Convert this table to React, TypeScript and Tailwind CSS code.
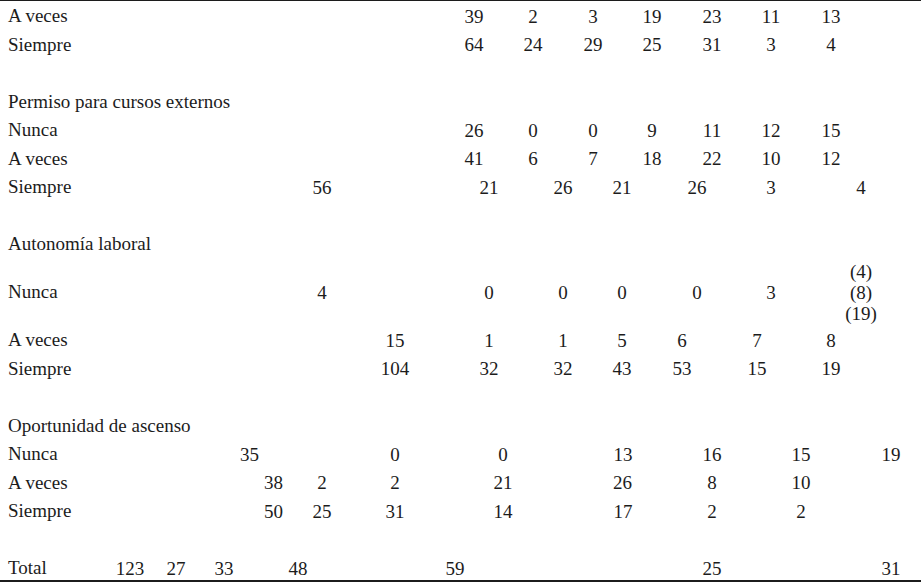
type Cell = [number, string];
type Row = { label?: string; cells?: Cell[]; tall?: boolean };

const rows: Row[] = [
  { label: "A veces", cells: [[474, "39"], [533, "2"], [593, "3"], [652, "19"], [712, "23"], [771, "11"], [831, "13"]] },
  { label: "Siempre", cells: [[474, "64"], [533, "24"], [593, "29"], [652, "25"], [712, "31"], [771, "3"], [831, "4"]] },
  {},
  { label: "Permiso para cursos externos" },
  { label: "Nunca", cells: [[474, "26"], [533, "0"], [593, "0"], [652, "9"], [712, "11"], [771, "12"], [831, "15"]] },
  { label: "A veces", cells: [[474, "41"], [533, "6"], [593, "7"], [652, "18"], [712, "22"], [771, "10"], [831, "12"]] },
  { label: "Siempre", cells: [[322, "56"], [489, "21"], [563, "26"], [622, "21"], [697, "26"], [771, "3"], [861, "4"]] },
  {},
  { label: "Autonomía laboral" },
  { label: "Nunca", tall: true, cells: [[322, "4"], [489, "0"], [563, "0"], [622, "0"], [697, "0"], [771, "3"], [861, "(4)|(8)|(19)"]] },
  { label: "A veces", cells: [[395, "15"], [489, "1"], [563, "1"], [622, "5"], [682, "6"], [757, "7"], [831, "8"]] },
  { label: "Siempre", cells: [[395, "104"], [489, "32"], [563, "32"], [622, "43"], [682, "53"], [757, "15"], [831, "19"]] },
  {},
  { label: "Oportunidad de ascenso" },
  { label: "Nunca", cells: [[249.5, "35"], [395, "0"], [503, "0"], [623, "13"], [712, "16"], [801, "15"], [891, "19"]] },
  { label: "A veces", cells: [[273.5, "38"], [322, "2"], [395, "2"], [503, "21"], [622.5, "26"], [712, "8"], [801, "10"]] },
  { label: "Siempre", cells: [[273.5, "50"], [322, "25"], [395, "31"], [503, "14"], [623, "17"], [712, "2"], [801, "2"]] },
  {},
  { label: "Total", cells: [[130, "123"], [176, "27"], [224, "33"], [298, "48"], [455, "59"], [712, "25"], [891, "31"]] },
];

const CELL_W = 40;

function TableRow({ row, last }: { row: Row; last: boolean }) {
  let x = 0;
  return (
    <div className={`relative flex items-center ${row.tall ? "h-[67.5px]" : last ? "h-[26px] pt-[2px]" : "h-[28.5px]"}`}>
      <span className="absolute left-[8px] whitespace-nowrap">{row.label}</span>
      {row.cells?.map(([center, text], i) => {
        const start = center - CELL_W / 2;
        const gap = start - x;
        x = start + CELL_W;
        const lines = text.split("|");
        return (
          <span key={i} className="flex shrink-0 flex-col items-center leading-[21px]" style={{ marginLeft: gap, width: CELL_W }}>
            {lines.map((l, j) => (
              <span key={j}>{l}</span>
            ))}
          </span>
        );
      })}
    </div>
  );
}

export default function App() {
  return (
    <div className="w-[921px] bg-white [font-family:'Liberation_Serif','Times_New_Roman',serif] text-[19px] text-[#1c1c1c]">
      <div className="border-t-[1.5px] border-b-2 border-[#1c1c1c] pt-[1px]">
        {rows.map((r, i) => (
          <TableRow key={i} row={r} last={i === rows.length - 1} />
        ))}
      </div>
    </div>
  );
}
